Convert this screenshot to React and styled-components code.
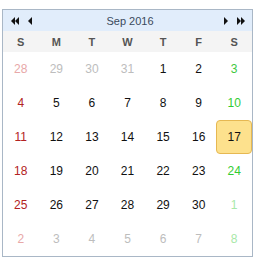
import React from 'react';
import styled, { createGlobalStyle } from 'styled-components';

const GlobalStyle = createGlobalStyle`
  body {
    margin: 0;
    background: #fff;
    font-family: Arial, "Liberation Sans", sans-serif;
  }
`;

const weekdays = ['S', 'M', 'T', 'W', 'T', 'F', 'S'];

const weeks = [
  [28, 29, 30, 31, 1, 2, 3],
  [4, 5, 6, 7, 8, 9, 10],
  [11, 12, 13, 14, 15, 16, 17],
  [18, 19, 20, 21, 22, 23, 24],
  [25, 26, 27, 28, 29, 30, 1],
  [2, 3, 4, 5, 6, 7, 8],
];

// days outside September
const isOther = (w, d) => (w === 0 && d < 4) || (w === 4 && d === 6) || w === 5;

const dayColor = (w, d) => {
  const other = isOther(w, d);
  if (d === 0) return other ? '#e8a8a8' : '#b22222';
  if (d === 6) {
    if (w === 0) return '#3fc83f';
    return other ? '#a8e8a8' : '#33cc33';
  }
  return other ? '#bdbdbd' : '#111';
};

const App = () => {
  return (
    <Page>
      <GlobalStyle />
      <Calendar>
        <Header>
          <NavGroup>
            <NavButton aria-label="previous year">
              <Arrow dir="left" />
              <Arrow dir="left" />
            </NavButton>
            <NavButton aria-label="previous month">
              <Arrow dir="left" />
            </NavButton>
          </NavGroup>
          <Title>Sep 2016</Title>
          <NavGroup>
            <NavButton aria-label="next month">
              <Arrow dir="right" />
            </NavButton>
            <NavButton aria-label="next year">
              <Arrow dir="right" />
              <Arrow dir="right" />
            </NavButton>
          </NavGroup>
        </Header>
        <Grid>
          {weekdays.map((w, i) => (
            <WeekDay key={i}>{w}</WeekDay>
          ))}
          {weeks.map((week, wi) =>
            week.map((day, di) => (
              <Day key={`${wi}-${di}`} $color={dayColor(wi, di)} $selected={day === 17 && wi === 2}>
                {day}
              </Day>
            ))
          )}
        </Grid>
      </Calendar>
    </Page>
  );
};

const Page = styled.div`
  padding: 9px 2px 0 2px;
`;

const Calendar = styled.div`
  width: 251px;
  box-sizing: border-box;
  border: 1px solid #a9b7c6;
  background: #fff;
`;

const Header = styled.div`
  height: 21px;
  display: flex;
  align-items: center;
  justify-content: space-between;
  background: #e1edfb;
  padding: 0 7px 0 8px;
`;

const NavGroup = styled.div`
  display: flex;
  align-items: center;
  gap: 9px;
`;

const NavButton = styled.div`
  display: flex;
  align-items: center;
  height: 10px;
`;

const Arrow = styled.span`
  width: 0;
  height: 0;
  border-top: 4px solid transparent;
  border-bottom: 4px solid transparent;
  ${(p) => (p.dir === 'left' ? 'border-right: 4px solid #111;' : 'border-left: 4px solid #111;')}
`;

const Title = styled.div`
  font-size: 11px;
  color: #3a4a5c;
  padding-left: 4px;
`;

const Grid = styled.div`
  display: grid;
  grid-template-columns: repeat(7, 1fr);
  grid-auto-rows: 34px;
  grid-template-rows: 21px;
`;

const WeekDay = styled.div`
  display: flex;
  align-items: center;
  justify-content: center;
  background: #f4f4f4;
  font-size: 11px;
  font-weight: bold;
  color: #555;
`;

const Day = styled.div`
  display: flex;
  align-items: center;
  justify-content: center;
  font-size: 12px;
  color: ${(p) => p.$color};
  box-sizing: border-box;
  ${(p) =>
    p.$selected &&
    `
    background: #fde18d;
    border: 1px solid #e6b852;
    border-radius: 4px;
    color: #111;
  `}
`;

export default App;
